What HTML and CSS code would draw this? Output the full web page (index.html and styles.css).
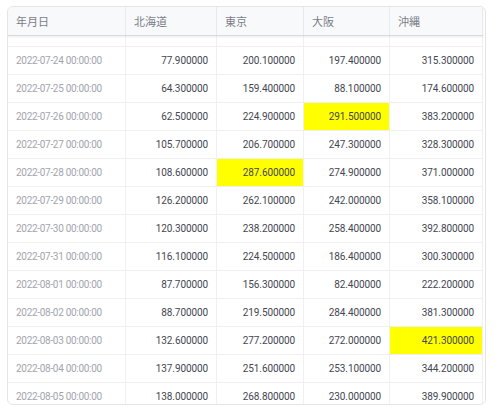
FILE: index.html
```html
<!DOCTYPE html>
<html lang="ja">
<head>
<meta charset="utf-8">
<link rel="stylesheet" href="styles.css">
</head>
<body>
<div class="frame">
  <div class="head">
    <div class="hc">年月日</div>
    <div class="hc">北海道</div>
    <div class="hc">東京</div>
    <div class="hc">大阪</div>
    <div class="hc">沖縄</div>
  </div>
  <div class="viewport">
    <div class="rows">
      <div class="row"><div class="c d">2022-07-23 00:00:00</div><div class="c">83.700000</div><div class="c">232.600000</div><div class="c">234.000000</div><div class="c">332.200000</div></div>
      <div class="row"><div class="c d">2022-07-24 00:00:00</div><div class="c">77.900000</div><div class="c">200.100000</div><div class="c">197.400000</div><div class="c">315.300000</div></div>
      <div class="row"><div class="c d">2022-07-25 00:00:00</div><div class="c">64.300000</div><div class="c">159.400000</div><div class="c">88.100000</div><div class="c">174.600000</div></div>
      <div class="row"><div class="c d">2022-07-26 00:00:00</div><div class="c">62.500000</div><div class="c">224.900000</div><div class="c hi">291.500000</div><div class="c">383.200000</div></div>
      <div class="row"><div class="c d">2022-07-27 00:00:00</div><div class="c">105.700000</div><div class="c">206.700000</div><div class="c">247.300000</div><div class="c">328.300000</div></div>
      <div class="row"><div class="c d">2022-07-28 00:00:00</div><div class="c">108.600000</div><div class="c hi">287.600000</div><div class="c">274.900000</div><div class="c">371.000000</div></div>
      <div class="row"><div class="c d">2022-07-29 00:00:00</div><div class="c">126.200000</div><div class="c">262.100000</div><div class="c">242.000000</div><div class="c">358.100000</div></div>
      <div class="row"><div class="c d">2022-07-30 00:00:00</div><div class="c">120.300000</div><div class="c">238.200000</div><div class="c">258.400000</div><div class="c">392.800000</div></div>
      <div class="row"><div class="c d">2022-07-31 00:00:00</div><div class="c">116.100000</div><div class="c">224.500000</div><div class="c">186.400000</div><div class="c">300.300000</div></div>
      <div class="row"><div class="c d">2022-08-01 00:00:00</div><div class="c">87.700000</div><div class="c">156.300000</div><div class="c">82.400000</div><div class="c">222.200000</div></div>
      <div class="row"><div class="c d">2022-08-02 00:00:00</div><div class="c">88.700000</div><div class="c">219.500000</div><div class="c">284.400000</div><div class="c">381.300000</div></div>
      <div class="row"><div class="c d">2022-08-03 00:00:00</div><div class="c">132.600000</div><div class="c">277.200000</div><div class="c">272.000000</div><div class="c hi">421.300000</div></div>
      <div class="row"><div class="c d">2022-08-04 00:00:00</div><div class="c">137.900000</div><div class="c">251.600000</div><div class="c">253.100000</div><div class="c">344.200000</div></div>
      <div class="row"><div class="c d">2022-08-05 00:00:00</div><div class="c">138.000000</div><div class="c">268.800000</div><div class="c">230.000000</div><div class="c">389.900000</div></div>
      <div class="row"><div class="c d">2022-08-06 00:00:00</div><div class="c">110.200000</div><div class="c">240.100000</div><div class="c">221.300000</div><div class="c">350.400000</div></div>
    </div>
  </div>
</div>
</body>
</html>
```
FILE: styles.css
```css
html, body {
  margin: 0;
  padding: 0;
  background: #ffffff;
}
body {
  padding: 6px 0 0 7px;
}
.frame {
  width: 477px;
  height: 397px;
  border: 1px solid #e4e5e9;
  border-radius: 6px;
  overflow: hidden;
  display: flex;
  flex-direction: column;
  background: #fff;
}
.head, .row {
  display: grid;
  grid-template-columns: 118px 91px 87px 86px 93px;
}
.head {
  height: 28px;
  background: #f8f9fb;
  border-bottom: 1px solid #d9dadf;
  box-shadow: 0 1px 2px rgba(0,0,0,0.08);
  position: relative;
  z-index: 1;
  width: 475px;
}
.hc {
  font-family: "Noto Sans CJK JP", "Noto Sans", sans-serif;
  font-size: 11px;
  color: #7b7e87;
  padding: 0 8px;
  display: flex;
  align-items: center;
  border-right: 1px solid #e9eaee;
}
.viewport {
  flex: 1;
  overflow: hidden;
}
.rows {
  margin-top: -17px;
}
.row {
  height: 27px;
  border-bottom: 1px solid #eff0f2;
  width: 475px;
}
.c {
  font-family: Roboto, "Noto Sans", sans-serif;
  font-size: 10px;
  letter-spacing: -0.1px;
  color: #444652;
  padding: 0 8px;
  display: flex;
  align-items: center;
  justify-content: flex-end;
  border-right: 1px solid #eff0f2;
  white-space: nowrap;
}
.c.d {
  justify-content: flex-start;
  letter-spacing: -0.3px;
  color: #a2a5ad;
}
.c.hi {
  background: #ffff00;
}
```
